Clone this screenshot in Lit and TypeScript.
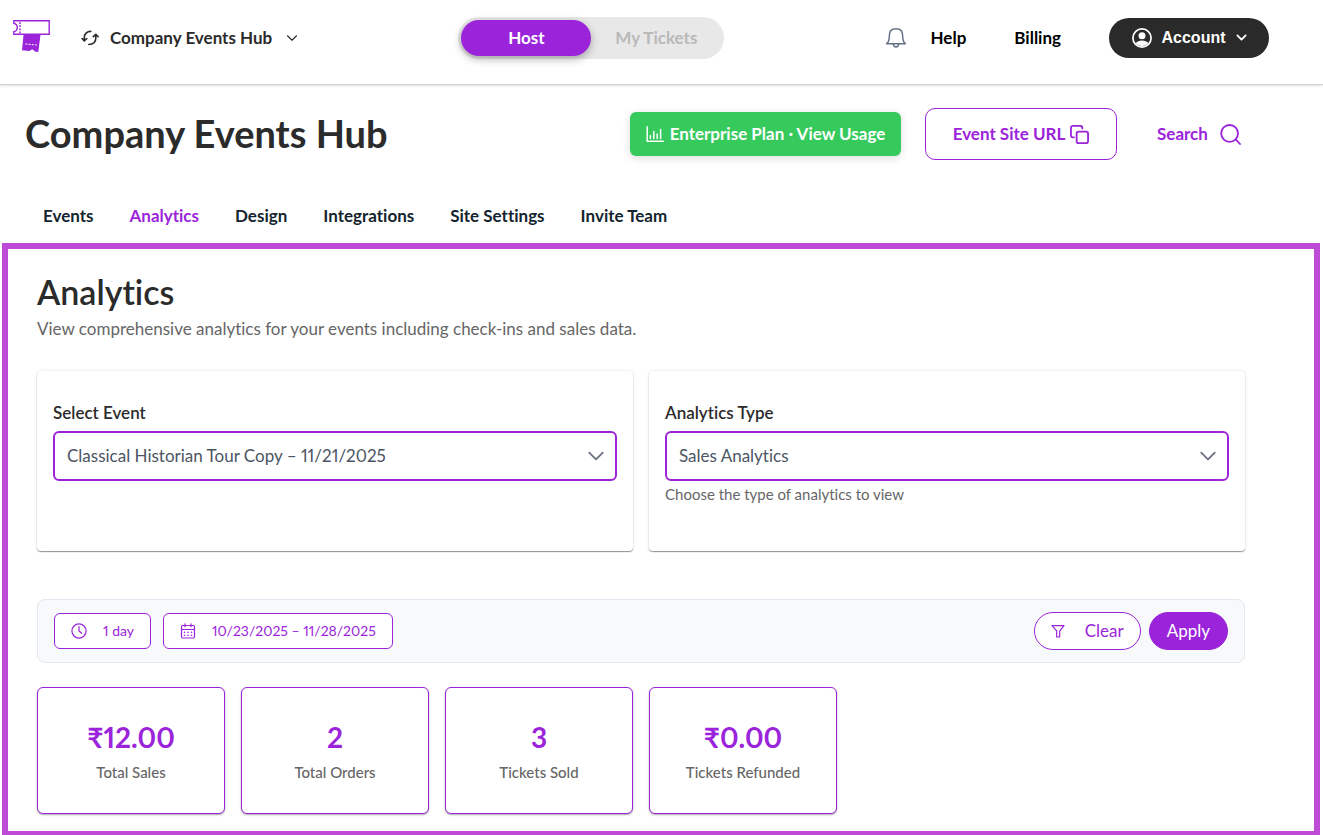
import { LitElement, html, css } from "lit";
import { customElement, property, state } from "lit/decorators.js";
import { classMap } from "lit/directives/class-map.js";

const icons = {
  logo: html`<svg width="37" height="32" viewBox="0 0 37 32" fill="none" aria-hidden="true">
    <path d="M10.600 14h17l-2.300 18-3.600-.4a2.600 2.600 0 0 0-5-.5l-7.700-.8z" fill="#9b24db" />
    <path d="M.8.8h35.400v13.400H.8v-2.400a4.400 4.400 0 0 0 0-8.600z" fill="#fff" stroke="#9b24db" stroke-width="1.400" />
    <path d="M7 2.200v11" stroke="#9b24db" stroke-width="1.500" stroke-dasharray="1.800 1.300" />
    <path d="M12.400 24l11.400 1" stroke="#fff" stroke-width="1" stroke-dasharray="2 1.200" />
  </svg>`,
  swap: html`<svg width="18" height="18" viewBox="0 0 18 18" fill="none" stroke="currentColor" stroke-width="1.600" stroke-linecap="round" stroke-linejoin="round" aria-hidden="true">
    <path d="M9.800 2.400C5.800 2.400 3.300 4.800 3.300 8.600v3M1 9.500l2.300 2.400 2.500-2.400" />
    <path d="M7.800 15.500c4.500 0 7-2.400 7-6.400V5.600M12.300 7.700l2.500-2.400 2.300 2.400" />
  </svg>`,
  chevron: (size: number, width: number) => html`<svg width=${size} height=${size} viewBox="0 0 16 16" fill="none" stroke="currentColor" stroke-width=${width} stroke-linecap="round" stroke-linejoin="round" aria-hidden="true">
    <path d="M2 5l6 6 6-6" />
  </svg>`,
  bell: html`<svg width="22" height="22" viewBox="0 0 22 22" fill="none" stroke="#667085" stroke-width="1.500" stroke-linecap="round" stroke-linejoin="round" aria-hidden="true">
    <path d="M1.600 16.700c2.200-1.500 2.800-3.400 2.800-8.400C4.400 4 7 1.700 11 1.700S17.600 4 17.600 8.300c0 5 .6 6.900 2.800 8.400zM8.300 17c.2 2 1.200 3 2.700 3s2.500-1 2.700-3" />
  </svg>`,
  user: html`<svg width="20" height="20" viewBox="0 0 20 20" fill="none" aria-hidden="true">
    <circle cx="10" cy="10" r="9.100" stroke="currentColor" stroke-width="1.700" />
    <circle cx="10" cy="7.700" r="3.500" fill="currentColor" />
    <path d="M3.700 15.300c1.400-2 3.600-2.900 6.300-2.900s4.900.9 6.300 2.900A8.500 8.500 0 0 1 10 18.200a8.500 8.500 0 0 1-6.300-2.900z" fill="currentColor" />
  </svg>`,
  chart: html`<svg width="18" height="16" viewBox="0 0 18 16" fill="none" stroke="currentColor" stroke-width="1.500" stroke-linecap="round" aria-hidden="true">
    <path d="M1.200.8v14.400h16M4.400 9.500v3M7.800 5.500v7M11.200 8v4.500M14.600 3.500v9" />
  </svg>`,
  copy: html`<svg width="19" height="19" viewBox="0 0 20 20" fill="none" stroke="currentColor" stroke-width="1.900" stroke-linecap="round" stroke-linejoin="round" aria-hidden="true">
    <rect x="7" y="7" width="12" height="12" rx="2" />
    <path d="M4.200 13H3a2 2 0 0 1-2-2V3a2 2 0 0 1 2-2h8a2 2 0 0 1 2 2v.6" />
  </svg>`,
  search: html`<svg width="21" height="21" viewBox="0 0 21 21" fill="none" stroke="currentColor" stroke-width="1.800" stroke-linecap="round" aria-hidden="true">
    <circle cx="9.600" cy="9.400" r="8.400" />
    <path d="M15.700 15.400l4.300 4.600" />
  </svg>`,
  clock: html`<svg width="16" height="16" viewBox="0 0 16 16" fill="none" stroke="currentColor" stroke-width="1.200" stroke-linecap="round" stroke-linejoin="round" aria-hidden="true">
    <circle cx="8" cy="8" r="7.100" />
    <path d="M8 3.700V8l2.700 2.300" />
  </svg>`,
  calendar: html`<svg width="16" height="16" viewBox="0 0 16 16" fill="none" stroke="currentColor" stroke-width="1.200" stroke-linecap="round" stroke-linejoin="round" aria-hidden="true">
    <rect x="1.500" y="2.500" width="13" height="12.500" rx="1.200" />
    <path d="M1.500 6.500h13M5 .8v3M11 .8v3" />
    <path d="M4.500 9.200h.1M8 9.200h.1M11.400 9.200h.1M4.500 12.200h.1M8 12.200h.1M11.400 12.200h.1" stroke-width="1.600" />
  </svg>`,
  funnel: html`<svg width="14" height="14" viewBox="0 0 14 14" fill="none" stroke="currentColor" stroke-width="1.200" stroke-linejoin="round" aria-hidden="true">
    <path d="M1 1.600h12l-4.300 5.200v6L5.700 13V6.800z" />
  </svg>`,
};

const base = css`
  :host {
    display: block;
  }
  * {
    box-sizing: border-box;
  }
  button,
  select {
    font: inherit;
    font-variant-ligatures: inherit;
    font-variant-numeric: inherit;
    color: inherit;
    background: none;
    border: 0;
    padding: 0;
    margin: 0;
    cursor: pointer;
    white-space: nowrap;
  }
  a {
    color: inherit;
    text-decoration: none;
  }
  svg {
    flex: none;
    display: block;
  }
`;

@customElement("site-header")
class SiteHeader extends LitElement {
  @state() private mode = "Host";

  static styles = [
    base,
    css`
      .bar {
        display: flex;
        justify-content: space-between;
        align-items: center;
        height: 85px;
        padding: 0 54px 9px 13px;
        border-bottom: 1px solid #d0d0d0;
        box-shadow: 0 1px 2px rgba(0, 0, 0, 0.12);
        font-weight: 700;
      }
      .group {
        display: flex;
        align-items: center;
      }
      .brand {
        margin-right: 31px;
        padding-bottom: 4px;
      }
      .hub {
        display: flex;
        align-items: center;
        color: #2b2b2b;
      }
      .hub-name {
        margin: 0 14px 0 11px;
      }
      .toggle {
        display: flex;
        padding: 3px;
        border-radius: 21px;
        background: #e8e8e8;
      }
      .option {
        width: 130px;
        height: 36px;
        border-radius: 18px;
        color: #b9b9b9;
      }
      .option.on {
        color: #fff;
        background: #9b24db;
        box-shadow: 0 3px 8px rgba(0, 0, 0, 0.3);
      }
      .links {
        gap: 48px;
        color: #000;
      }
      .alerts {
        display: flex;
        gap: 24px;
        align-items: center;
      }
      .account {
        display: flex;
        align-items: center;
        justify-content: center;
        gap: 10px;
        width: 160px;
        height: 40px;
        border-radius: 20px;
        background: #2a2a2a;
        color: #fff;
        font-family: "Liberation Sans", Arial, sans-serif;
        font-size: 16px;
      }
    `,
  ];

  render() {
    return html`<header class="bar">
      <div class="group">
        <a class="brand" href="#home" aria-label="Home">${icons.logo}</a>
        <button class="hub">
          ${icons.swap}<span class="hub-name">Company Events Hub</span>${icons.chevron(12, 1.5)}
        </button>
      </div>
      <div class="toggle">
        ${["Host", "My Tickets"].map(
          (m) => html`<button
            class=${classMap({ option: true, on: this.mode === m })}
            aria-pressed=${this.mode === m}
            @click=${() => (this.mode = m)}
          >${m}</button>`
        )}
      </div>
      <nav class="group links">
        <div class="alerts">
          <button aria-label="Notifications">${icons.bell}</button>
          <a href="#help">Help</a>
        </div>
        <a href="#billing">Billing</a>
        <button class="account">${icons.user}Account${icons.chevron(11, 2.6)}</button>
      </nav>
    </header>`;
  }
}

@customElement("hub-heading")
class HubHeading extends LitElement {
  @state() private tab = "Analytics";

  static styles = [
    base,
    css`
      .row {
        display: flex;
        align-items: center;
        justify-content: space-between;
        padding: 23px 54px 0 25px;
      }
      .title {
        margin: 0;
        padding-bottom: 2px;
        font-size: 38px;
        line-height: 50px;
        font-weight: 700;
        color: #2b2b2b;
      }
      .actions {
        display: flex;
        align-items: center;
        font-weight: 700;
        gap: 24px;
        color: #9b24db;
      }
      .actions a,
      .actions button {
        display: flex;
        align-items: center;
        justify-content: center;
      }
      .actions .plan {
        width: 271px;
        height: 44px;
        gap: 6px;
        border-radius: 6px;
        background: #36c95c;
        color: #fff;
        box-shadow: 0 2px 8px rgba(0, 0, 0, 0.14);
      }
      .actions .url {
        width: 192px;
        height: 52px;
        gap: 5px;
        border: 1px solid #9b24db;
        border-radius: 10px;
      }
      .actions .search {
        justify-content: flex-start;
        gap: 12px;
        width: 128px;
        padding-left: 16px;
      }
      .tabs {
        display: flex;
        gap: 36px;
        padding: 44px 43px 15px;
        font-weight: 700;
        color: #14242e;
      }
      .tab.on {
        color: #9b24db;
      }
    `,
  ];

  render() {
    const tabs = ["Events", "Analytics", "Design", "Integrations", "Site Settings", "Invite Team"];
    return html`<div class="row">
        <h1 class="title">Company Events Hub</h1>
        <div class="actions">
          <a class="plan" href="#usage">${icons.chart}Enterprise Plan · View Usage</a>
          <button class="url">Event Site URL${icons.copy}</button>
          <button class="search">Search${icons.search}</button>
        </div>
      </div>
      <nav class="tabs">
        ${tabs.map(
          (t) => html`<a
            href="#"
            class=${classMap({ tab: true, on: this.tab === t })}
            @click=${(e: Event) => {
              e.preventDefault();
              this.tab = t;
            }}
          >${t}</a>`
        )}
      </nav>`;
  }
}

@customElement("select-card")
class SelectCard extends LitElement {
  @property() label = "";
  @property() hint = "";
  @property({ attribute: false }) options: string[] = [];

  static styles = [
    base,
    css`
      .card {
        height: 100%;
        padding: 30px 16px 47px;
        border-radius: 4px;
        background: #fff;
        box-shadow: 0 1px 1px rgba(0, 0, 0, 0.4), 0 0 3px rgba(0, 0, 0, 0.12);
      }
      .label {
        display: block;
        margin-bottom: 6px;
        font-weight: 600;
        color: #2b2b2b;
      }
      .field {
        display: grid;
        align-items: center;
      }
      .field > * {
        grid-area: 1 / 1;
      }
      .select {
        appearance: none;
        width: 100%;
        height: 50px;
        padding: 0 48px 0 12px;
        border: 2px solid #9b24db;
        border-radius: 6px;
        background: #fff;
        color: #4b5563;
      }
      .field svg {
        justify-self: end;
        margin-right: 12px;
        color: #6b7280;
        pointer-events: none;
      }
      .hint {
        margin: 3px 0 0;
        font-size: 15px;
        line-height: 20px;
        color: #666;
      }
    `,
  ];

  render() {
    return html`<div class="card">
      <label class="label" for="choice">${this.label}</label>
      <div class="field">
        <select class="select" id="choice">
          ${this.options.map((o) => html`<option>${o}</option>`)}
        </select>
        ${icons.chevron(18, 1.6)}
      </div>
      ${this.hint ? html`<p class="hint">${this.hint}</p>` : ""}
    </div>`;
  }
}

@customElement("filter-bar")
class FilterBar extends LitElement {
  static styles = [
    base,
    css`
      .bar {
        display: flex;
        justify-content: space-between;
        align-items: center;
        padding: 12px 16px;
        border: 1px solid #e2e8f0;
        border-radius: 8px;
        background: #f8f9fb;
        color: #9b24db;
      }
      .group {
        display: flex;
        align-items: center;
        gap: 12px;
      }
      .group.end {
        gap: 8px;
      }
      .chip,
      .pill {
        display: flex;
        align-items: center;
        border: 1px solid #9b24db;
        background: #fff;
      }
      .chip {
        height: 36px;
        gap: 16px;
        padding: 0 16px;
        border-radius: 6px;
        font-size: 14px;
      }
      .pill {
        height: 38px;
        gap: 20px;
        padding: 0 16px;
        border-radius: 19px;
        font-size: 17px;
      }
      .pill.solid {
        padding: 0 17px;
        background: #9b24db;
        color: #fff;
      }
    `,
  ];

  render() {
    return html`<div class="bar">
      <div class="group">
        <button class="chip">${icons.clock}1 day</button>
        <button class="chip">${icons.calendar}10/23/2025 – 11/28/2025</button>
      </div>
      <div class="group end">
        <button class="pill">${icons.funnel}Clear</button>
        <button class="pill solid">Apply</button>
      </div>
    </div>`;
  }
}

@customElement("stat-card")
class StatCard extends LitElement {
  @property() value = "";
  @property() label = "";

  static styles = [
    base,
    css`
      .card {
        padding: 29px 8px;
        border: 1px solid #9b24db;
        border-radius: 6px;
        background: #fff;
        box-shadow: 0 1px 2px rgba(0, 0, 0, 0.35);
        text-align: center;
      }
      .value {
        font-size: 28px;
        line-height: 40px;
        font-weight: 700;
        color: #9b24db;
      }
      .label {
        margin-top: 3px;
        font-size: 15px;
        line-height: 24px;
        font-weight: 500;
        color: #666;
      }
    `,
  ];

  render() {
    return html`<div class="card">
      <div class="value">${this.value}</div>
      <div class="label">${this.label}</div>
    </div>`;
  }
}

@customElement("app-root")
class AppRoot extends LitElement {
  static styles = [
    base,
    css`
      :host {
        background: #fff;
        font-family: Lato, "Noto Sans", sans-serif;
        font-size: 17px;
        line-height: 24px;
        font-variant-ligatures: none;
        font-variant-numeric: proportional-nums;
      }
      .frame {
        margin: 0 3px 0 2px;
        padding: 23px 69px 17px 29px;
        border: 6px solid #bd4bd6;
        border-bottom-width: 4px;
      }
      .title {
        margin: 0 0 5px;
        font-size: 34px;
        line-height: 40px;
        font-weight: 600;
        color: #2b2b2b;
      }
      .intro {
        margin: 0 0 30px;
        color: #666;
      }
      .selects {
        display: grid;
        grid-template-columns: 1fr 1fr;
        gap: 16px;
        margin-bottom: 48px;
      }
      .stats {
        display: grid;
        grid-template-columns: repeat(6, 1fr);
        gap: 16px;
        margin-top: 24px;
      }
    `,
  ];

  render() {
    const stats = [
      ["₹12.00", "Total Sales"],
      ["2", "Total Orders"],
      ["3", "Tickets Sold"],
      ["₹0.00", "Tickets Refunded"],
    ];
    return html`<site-header></site-header>
      <hub-heading></hub-heading>
      <main class="frame">
        <h2 class="title">Analytics</h2>
        <p class="intro">View comprehensive analytics for your events including check-ins and sales data.</p>
        <div class="selects">
          <select-card label="Select Event" .options=${["Classical Historian Tour Copy – 11/21/2025"]}></select-card>
          <select-card
            label="Analytics Type"
            hint="Choose the type of analytics to view"
            .options=${["Sales Analytics"]}
          ></select-card>
        </div>
        <filter-bar></filter-bar>
        <div class="stats">
          ${stats.map(([value, label]) => html`<stat-card value=${value} label=${label}></stat-card>`)}
        </div>
      </main>`;
  }
}
